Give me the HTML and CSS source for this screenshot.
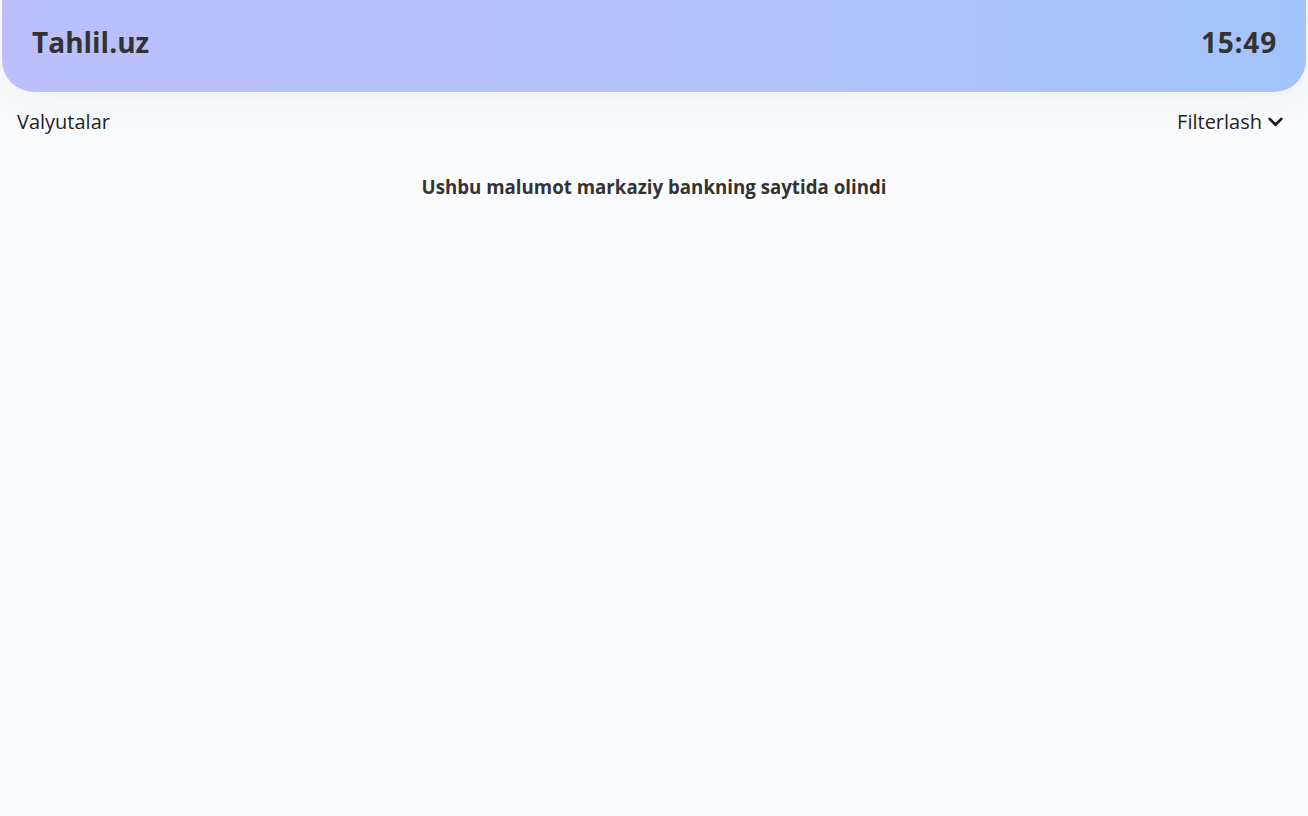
FILE: index.html
```html
<!DOCTYPE html>
<html lang="uz">
<head>
<meta charset="utf-8">
<title>Tahlil.uz</title>
<link rel="stylesheet" href="styles.css">
</head>
<body>
<div class="app">
  <header class="topbar">
    <div class="brand">Tahlil.uz</div>
    <div class="clock">15:49</div>
  </header>
  <div class="toolbar">
    <span class="section-title">Valyutalar</span>
    <button class="filter">Filterlash
      <svg class="chev" width="17" height="17" viewBox="0 0 16 16" aria-hidden="true"><path d="M2.5 5.5 L8 11 L13.5 5.5" fill="none" stroke="#1a1a1a" stroke-width="2.5" stroke-linecap="round" stroke-linejoin="round"/></svg>
    </button>
  </div>
  <p class="note">Ushbu malumot markaziy bankning saytida olindi</p>
</div>
</body>
</html>
```
FILE: styles.css
```css
* { box-sizing: border-box; }
html, body { margin: 0; padding: 0; height: 100%; }
body {
  background: #fbfcfe;
  font-family: "Open Sans", "Lato", sans-serif;
  color: #333;
}
.app {
  min-height: 100vh;
  padding: 0 2px;
}
.topbar {
  height: 92px;
  border-radius: 0 0 32px 32px;
  background: linear-gradient(90deg, #bcbffb 0%, #b4c3fc 50%, #a3c4fa 100%);
  box-shadow: 0 8px 40px rgba(180, 185, 200, 0.18);
  display: flex;
  align-items: center;
  justify-content: space-between;
  padding: 0 30px 8px;
}
.brand, .clock {
  font-size: 28px;
  font-weight: 700;
  color: #333;
}
.clock { letter-spacing: 0.8px; margin-right: -1px; }
.toolbar {
  display: flex;
  justify-content: space-between;
  align-items: center;
  padding: 16px 22px 0 15px;
}
.section-title {
  font-size: 20px;
  color: #1f1f1f;
}
.filter {
  border: 0;
  background: none;
  font: inherit;
  font-size: 20px;
  color: #1f1f1f;
  display: flex;
  align-items: center;
  gap: 5px;
  padding: 0;
  cursor: pointer;
}
.note {
  margin: 39px 0 0;
  text-align: center;
  font-size: 18.7px;
  font-weight: 700;
  color: #333;
}
```
